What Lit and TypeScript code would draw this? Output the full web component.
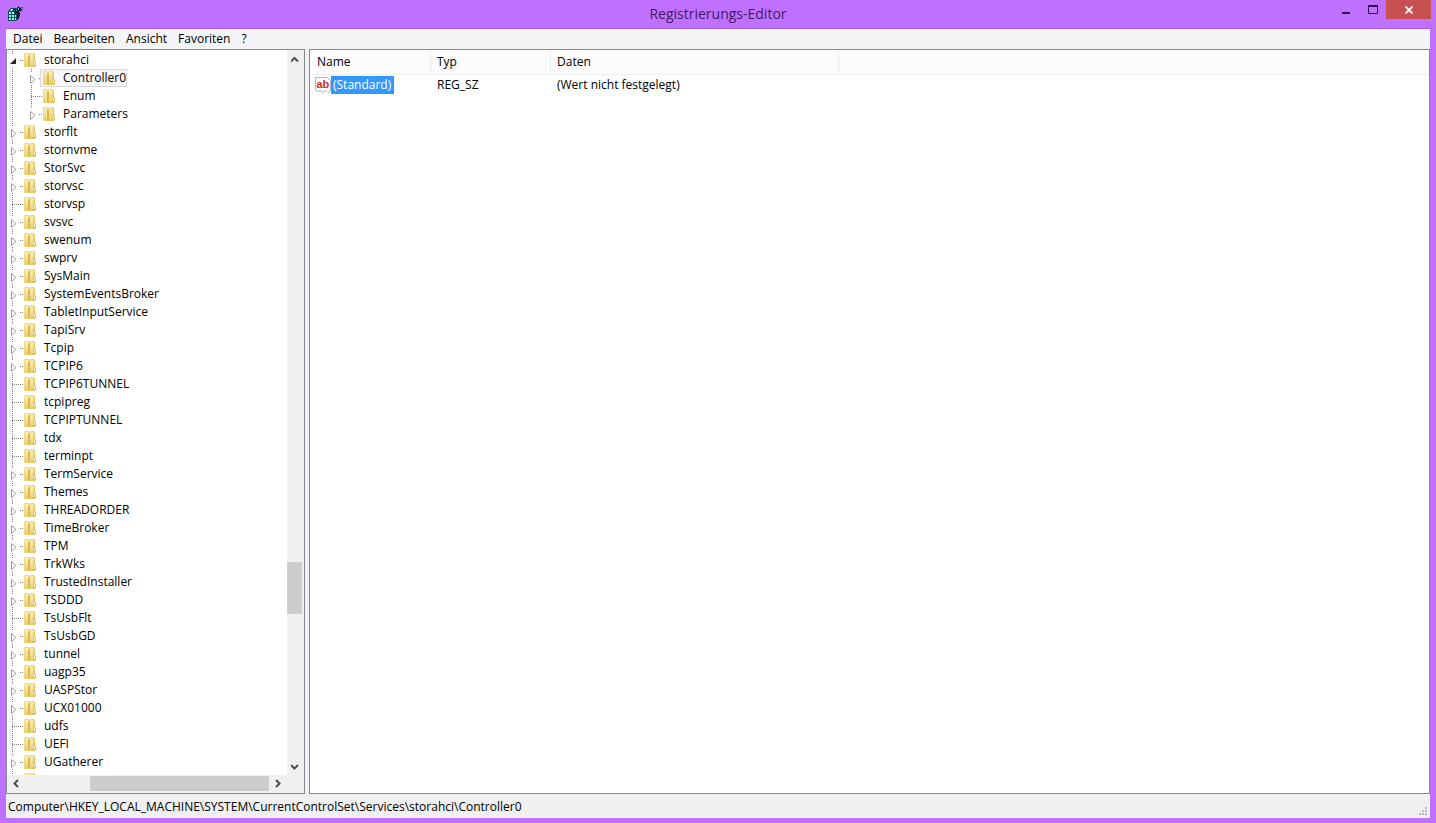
import { LitElement, html, svg, css, nothing } from "lit";
import { customElement, property, state } from "lit/decorators.js";
import { classMap } from "lit/directives/class-map.js";

interface Key {
  name: string;
  depth: number;
  kind: "leaf" | "closed" | "open";
}

const top = (name: string): Key => ({
  name: name.replace("-", ""),
  depth: 0,
  kind: name.startsWith("-") ? "leaf" : "closed",
});

// A leading dash marks a key without subkeys.
const KEYS: Key[] = [
  { name: "storahci", depth: 0, kind: "open" },
  { name: "Controller0", depth: 1, kind: "closed" },
  { name: "Enum", depth: 1, kind: "leaf" },
  { name: "Parameters", depth: 1, kind: "closed" },
  ...(
    "storflt stornvme StorSvc storvsc -storvsp svsvc swenum swprv SysMain SystemEventsBroker " +
    "TabletInputService TapiSrv Tcpip TCPIP6 -TCPIP6TUNNEL -tcpipreg -TCPIPTUNNEL -tdx -terminpt " +
    "TermService Themes THREADORDER TimeBroker TPM TrkWks TrustedInstaller TSDDD -TsUsbFlt TsUsbGD " +
    "tunnel uagp35 UASPStor UCX01000 -udfs -UEFI UGatherer"
  )
    .split(" ")
    .map(top),
  { name: "", depth: 0, kind: "closed" },
];

@customElement("tree-row")
class TreeRow extends LitElement {
  @property({ attribute: false }) key!: Key;
  @property({ type: Boolean }) selected = false;
  @property({ type: Boolean }) last = false;

  static styles = css`
    :host {
      display: flex;
      height: 18px;
      flex: none;
      white-space: nowrap;
    }
    svg {
      display: block;
      flex: none;
    }
    .guide {
      overflow: visible;
    }
    .item {
      display: flex;
      align-items: center;
      box-sizing: border-box;
      border: 1px solid transparent;
      padding-left: 1px;
      gap: 7px;
    }
    .item.selected {
      border-color: #dadada;
      background: #f7f7f7;
    }
    .label {
      line-height: 16px;
    }
  `;

  private guide() {
    const { kind } = this.key;
    return html`<svg class="guide" width="14" height="18" viewBox="0 0 14 18" aria-hidden="true">
      <g stroke="#808080" stroke-dasharray="1 1" fill="none">
        ${kind === "leaf"
          ? svg`<path d="M5.5 0V18M5 9.5H16" />`
          : svg`<path d="M5.5 0V4M13 9.5H16" />${this.last ? nothing : svg`<path d="M5.5 16V18" />`}`}
      </g>
      ${kind === "closed"
        ? svg`<path d="M4.5 6.5V14.5L9 10.5Z" fill="#fff" stroke="#a0a0a0" />`
        : nothing}
      ${kind === "open" ? svg`<path d="M9 7V13H3Z" fill="#262626" />` : nothing}
    </svg>`;
  }

  render() {
    return html`
      ${this.key.depth
        ? html`<svg width="19" height="18" aria-hidden="true">
            <path d="M5.5 0V18" stroke="#808080" stroke-dasharray="1 1" />
          </svg>`
        : nothing}
      ${this.guide()}
      <div class=${classMap({ item: true, selected: this.selected })}>
        <svg width="14" height="16" viewBox="0 0 14 16" aria-hidden="true">
          <defs>
            <linearGradient id="back" x2="1" y2="1">
              <stop offset="0" stop-color="#f7e9a4" />
              <stop offset="1" stop-color="#dfbb4a" />
            </linearGradient>
            <linearGradient id="front" x2="0" y2="1">
              <stop offset="0" stop-color="#faf0b8" />
              <stop offset="1" stop-color="#e8cd6c" />
            </linearGradient>
          </defs>
          <path d="M1 2L2 1H6V15H1Z" fill="#eed982" />
          <path d="M5 2L6 1H11L12 2V15H5Z" fill="url(#back)" />
          <path d="M2 2H5V14L2 15Z" fill="url(#front)" />
          <path d="M5 3L7 4V15L5 14Z" fill="#d9b950" />
          <path d="M7 4L9 2H10V13L7 15Z" fill="url(#front)" />
          <path d="M11 9H12L13 10V14L11 15Z" fill="#e0c05a" />
          <path d="M11.5 10V13" stroke="#fff8d5" />
        </svg>
        <span class="label">${this.key.name}</span>
      </div>
    `;
  }
}

@customElement("scroll-bar")
class ScrollBar extends LitElement {
  @property({ reflect: true }) orientation: "vertical" | "horizontal" = "vertical";
  @property({ type: Number }) before = 0;
  @property({ type: Number }) size = 0;
  @property({ type: Number }) after = 0;

  static styles = css`
    :host {
      display: flex;
      flex-direction: column;
      background: #f0f0f0;
    }
    :host([orientation="horizontal"]) {
      flex-direction: row;
    }
    button {
      flex: none;
      width: 17px;
      height: 17px;
      padding: 0;
      border: 0;
      background: none;
      display: grid;
      place-items: center;
    }
    .thumb {
      background: #cdcdcd;
    }
    :host([orientation="vertical"]) .thumb {
      margin-right: 2px;
    }
    :host([orientation="horizontal"]) .thumb {
      margin: 1px 0 2px;
    }
    .arrow {
      fill: none;
      stroke: #505050;
      stroke-width: 2;
    }
  `;

  render() {
    const v = this.orientation === "vertical";
    const arrow = (d: string) =>
      html`<svg class="arrow" width="9" height="9" viewBox="0 0 9 9"><path d=${d} /></svg>`;
    return html`
      <button aria-label=${v ? "Nach oben" : "Nach links"}>
        ${arrow(v ? "M0 7.5L3.5 4L7 7.5" : "M7 1L3.5 4.5L7 8")}
      </button>
      <div style="flex:${this.before}"></div>
      <div class="thumb" style="flex:${this.size}"></div>
      <div style="flex:${this.after}"></div>
      <button aria-label=${v ? "Nach unten" : "Nach rechts"}>
        ${arrow(v ? "M0 3L3.5 6.5L7 3" : "M2 1L5.5 4.5L2 8")}
      </button>
    `;
  }
}

@customElement("app-root")
class AppRoot extends LitElement {
  @state() private selected = "Controller0";

  static styles = css`
    :host {
      display: flex;
      flex-direction: column;
      box-sizing: border-box;
      height: 100vh;
      padding: 0 6px 5px;
      background: #c070ff;
      color: #000;
      font: 12px/18px "Open Sans", "Noto Sans", sans-serif;
      overflow: hidden;
    }
    button {
      font: inherit;
      color: inherit;
      border: 0;
      padding: 0;
      background: none;
    }
    svg {
      display: block;
    }
    .titlebar {
      flex: none;
      height: 28px;
      display: grid;
      grid-template-columns: 1fr auto 1fr;
    }
    .app-icon {
      margin: 5px 0 0 1px;
    }
    .title {
      margin: 0;
      font-size: 14px;
      line-height: 28px;
      font-weight: 400;
      color: #401a60;
    }
    .window-buttons {
      display: flex;
      justify-content: flex-end;
      align-items: flex-start;
      margin-right: -1px;
    }
    .window-buttons button {
      width: 27px;
      height: 19px;
      display: grid;
      place-items: center;
    }
    .window-buttons .close {
      width: 45px;
      background: #c75050;
    }
    .client {
      flex: 1;
      min-height: 0;
      display: flex;
      flex-direction: column;
      background: #f0f0f0;
      border-top: 1px solid #a95fe4;
    }
    .menu {
      flex: none;
      display: flex;
      gap: 11px;
      height: 20px;
      padding-left: 7px;
      background: #f4f5f7;
    }
    .menu button {
      line-height: 20px;
    }
    .panes {
      flex: 1;
      min-height: 0;
      display: grid;
      grid-template-columns: 299px 1fr;
      gap: 4px;
    }
    .pane {
      min-width: 0;
      min-height: 0;
      background: #fff;
      border: 1px solid #828790;
    }
    .tree-pane {
      display: grid;
      grid-template: minmax(0, 1fr) 18px / minmax(0, 1fr) 17px;
      background: #f0f0f0;
    }
    .tree {
      display: flex;
      flex-direction: column;
      overflow: hidden;
      padding-top: 1px;
      background: #fff;
    }
    table {
      width: 100%;
      table-layout: fixed;
      border-collapse: separate;
      border-spacing: 0;
    }
    th,
    td {
      box-sizing: border-box;
      padding: 0 7px;
      text-align: left;
      font-weight: 400;
    }
    th {
      height: 25px;
      background: #fcfcfc;
      border-right: 1px solid #e8ebf0;
      border-bottom: 1px solid #edeff3;
    }
    th:last-child {
      border-right: 0;
    }
    .c1 {
      width: 121px;
    }
    .c2 {
      width: 120px;
    }
    .c3 {
      width: 288px;
    }
    td {
      height: 20px;
      padding: 0 6px;
    }
    th + th {
      padding-left: 6px;
    }
    td:first-child {
      padding: 0 0 0 5px;
    }
    .value {
      display: flex;
      align-items: center;
    }
    .value-name {
      padding: 0 3px 0 2px;
      background: #3399ff;
      outline: 1px dotted #b8742c;
      outline-offset: -1px;
      color: #fff;
    }
    .ab {
      font: bold 11px "Liberation Sans", sans-serif;
      fill: #c8301c;
    }
    .status {
      flex: none;
      height: 24px;
      display: flex;
      justify-content: space-between;
      align-items: flex-end;
      padding: 0 2px;
    }
    .status p {
      margin: 0;
      line-height: 23px;
    }
    .grip {
      margin-bottom: 2px;
      fill: #b8b8b8;
    }
  `;

  render() {
    return html`
      <header class="titlebar">
        <svg class="app-icon" width="18" height="18" viewBox="0 0 18 18" aria-hidden="true">
          <path d="M1 6L4 3H9L12 6V13L9 16H1Z" fill="#14505c" />
          <path
            d="M2 7H4V9H2ZM5 7H7V9H5ZM2 10H4V12H2ZM5 10H7V12H5ZM2 13H4V15H2ZM5 13H7V15H5ZM4 4H6V5H4ZM3 5H5V6H3ZM8 10H9V12H8ZM8 13H9V15H8Z"
            fill="#9df3ee"
          />
          <path d="M8 4H10V3L12 1L13 3L16 2L15 5L13 7V10L12 13L10 15V8L8 9Z" fill="#0b1722" />
          <path d="M11 3H12V5H11ZM14 3H15V4H14ZM12 6H13V7H12ZM9 5H10V6H9ZM12 1H13V2H12Z" fill="#4cc4d8" />
        </svg>
        <h1 class="title">Registrierungs-Editor</h1>
        <div class="window-buttons">
          <button aria-label="Minimieren">
            <svg width="10" height="10"><path d="M1 7H9V9H1Z" fill="#2c0f45" /></svg>
          </button>
          <button aria-label="Maximieren">
            <svg width="10" height="9">
              <path d="M.5 1V8.5H9.5V1M0 1H10" fill="none" stroke="#2c0f45" />
              <path d="M0 0H10V2H0Z" fill="#2c0f45" />
            </svg>
          </button>
          <button class="close" aria-label="Schließen">
            <svg width="8" height="8">
              <path d="M.5 .5L7.5 7.5M7.5 .5L.5 7.5" stroke="#fff" stroke-width="1.8" />
            </svg>
          </button>
        </div>
      </header>
      <main class="client">
        <nav class="menu">
          ${["Datei", "Bearbeiten", "Ansicht", "Favoriten", "?"].map(
            (m) => html`<button>${m}</button>`
          )}
        </nav>
        <div class="panes">
          <section class="pane tree-pane">
            <div class="tree" role="tree" aria-label="Schlüssel">
              ${KEYS.map(
                (k, i) => html`<tree-row
                  role="treeitem"
                  .key=${k}
                  ?selected=${k.name === this.selected}
                  ?last=${KEYS[i + 1]?.depth !== k.depth && k.depth > 0}
                  @click=${() => (this.selected = k.name)}
                ></tree-row>`
              )}
            </div>
            <scroll-bar orientation="vertical" before="495" size="52" after="144"></scroll-bar>
            <scroll-bar orientation="horizontal" before="66" size="179" after="1"></scroll-bar>
          </section>
          <section class="pane">
            <table>
              <thead>
                <tr>
                  <th class="c1">Name</th>
                  <th class="c2">Typ</th>
                  <th class="c3">Daten</th>
                  <th></th>
                </tr>
              </thead>
              <tbody>
                <tr>
                  <td>
                    <div class="value">
                      <svg width="16" height="16" viewBox="0 0 16 16" aria-hidden="true">
                        <path
                          d="M.5 .5H12L15.5 4V14L13 15.5L11 13.5L8 15.5L5 13.5L3 14.5L.5 13Z"
                          fill="#fff"
                          stroke="#b4b4b4"
                        />
                        <text class="ab" x="1.5" y="11">ab</text>
                      </svg>
                      <span class="value-name">(Standard)</span>
                    </div>
                  </td>
                  <td>REG_SZ</td>
                  <td>(Wert nicht festgelegt)</td>
                  <td></td>
                </tr>
              </tbody>
            </table>
          </section>
        </div>
        <footer class="status">
          <p>Computer\\HKEY_LOCAL_MACHINE\\SYSTEM\\CurrentControlSet\\Services\\storahci\\Controller0</p>
          <svg class="grip" width="9" height="9" viewBox="0 0 9 9" aria-hidden="true">
            <path d="M6 0H8V2H6ZM3 3H5V5H3ZM6 3H8V5H6ZM0 6H2V8H0ZM3 6H5V8H3ZM6 6H8V8H6Z" />
          </svg>
        </footer>
      </main>
    `;
  }
}
